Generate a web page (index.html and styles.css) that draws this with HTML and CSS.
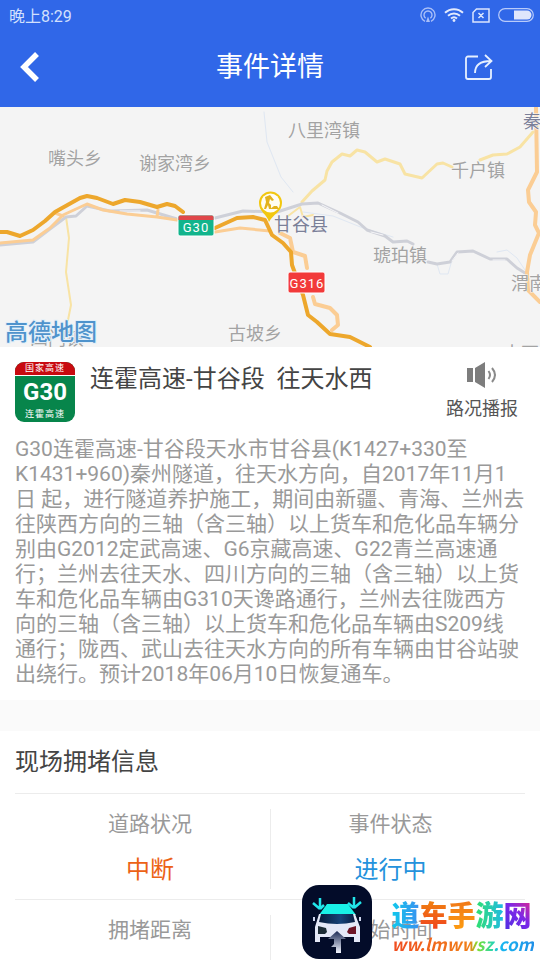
FILE: index.html
```html
<!DOCTYPE html>
<html lang="zh-CN">
<head>
  <meta charset="UTF-8">
  <meta name="viewport" content="width=device-width, initial-scale=1">
  <title>事件详情</title>
  <link rel="stylesheet" href="styles.css">
</head>
<body>
  <div class="screen">
    <header class="top">
      <div class="status-bar">
        <span>晚上8:29</span>
        <div class="status-icons">
          <svg width="16" height="16" viewBox="0 0 16 16" fill="none" stroke="#a9bff8" stroke-width="1.4">
            <path d="M5 14.3a7 7 0 1 1 6 0"/>
            <path d="M5.600 11.200a4 4 0 1 1 4.800 0"/>
            <path d="M8 9.500l2 5.500H6z" fill="#a9bff8" stroke="none"/>
          </svg>
          <svg width="20" height="14" viewBox="0 0 20 14" fill="none" stroke="#e3eafd" stroke-width="1.900">
            <path d="M1 4.800a13 13 0 0 1 18 0M4 7.800a9 9 0 0 1 12 0M7 10.500a4.500 4.500 0 0 1 6 0"/>
            <circle cx="10" cy="12.500" r="1.400" fill="#e3eafd" stroke="none"/>
          </svg>
          <svg width="18" height="15" viewBox="0 0 18 15" fill="none" stroke="#dbe5fd" stroke-width="1.500">
            <path d="M4.500 1H17v13H1V4.500zM6.500 5l5 5M11.500 5l-5 5"/>
          </svg>
          <svg width="36" height="14" viewBox="0 0 36 14">
            <rect x="0.700" y="0.700" width="34.600" height="12.600" rx="6.300" fill="none" stroke="#b9cbfa" stroke-width="1.200"/>
            <path d="M16 2.500h13a4.500 4.500 0 0 1 0 9H16z" fill="#dfe6fc"/>
          </svg>
        </div>
      </div>
      <div class="nav">
        <button class="nav-btn" aria-label="返回">
          <svg width="20" height="30" viewBox="0 0 20 30" fill="none" stroke="#fff" stroke-width="5.500">
            <path d="M18 2L5 15l13 13"/>
          </svg>
        </button>
        <h1>事件详情</h1>
        <button class="nav-btn share" aria-label="分享">
          <svg width="30" height="28" viewBox="0 0 30 28" fill="none" stroke="#e6f0ff" stroke-width="1.800">
            <path d="M14 3.500H4a2 2 0 0 0-2 2V24a2 2 0 0 0 2 2h21a2 2 0 0 0 2-2v-8"/>
            <path d="M11 20c0-8 5-12 16-12M21 2l6.500 6L21 14"/>
          </svg>
        </button>
      </div>
    </header>

    <main class="content">
      <section class="map">
        <svg class="map-canvas" viewBox="0 0 540 240" preserveAspectRatio="xMidYMid slice">
          <g fill="none" stroke-linejoin="round" stroke-linecap="round">
            <!-- rivers -->
            <g stroke="#dfe7f2" stroke-width="1">
              <path d="M264 5l3 30 14 35 12 15M303 105l30 4 30 12 30 9M437 157l3 10 8 0 4-14M497 145l10-2 10 8 8 12"/>
            </g>
            <!-- county roads -->
            <g stroke="#f8e3a4" stroke-width="3">
              <path d="M66 110l3 21-3 34 5 33-3 15" stroke-width="2"/>
              <path d="M302 95l10-11 13-11 2-9 5-9 10-8 8 2 7-6 8 2 12 10 8-3 15 5 5 10 17 4 15-14 6-1 9 4M480 53l13-5 14-1 13-7 13-15"/>
              <path d="M288 109l12-9 3 10 10-2" stroke-width="2"/>
            </g>
            <!-- railway -->
            <g stroke="#ced0d8" stroke-width="3">
              <path d="M0 138l33-3 17-13 16-12 10-1 11-10 23 5 37-1 30 9 8 4M215 111l28-7 34 1 25-8 16-1 22 10 18 9 9 8 18 6 8 6 14-1 6 3M428 155l9 2 13-2 7-10 16-1 17 8 17 0 10 9 8 5"/>
              <path d="M120 104l20 0M322 98l16 8M371 125l12 3M458 146l-6 8M493 153l12 0" stroke="#f6f6f9" stroke-width="1"/>
            </g>
            <!-- provincial roads -->
            <g stroke="#fbcd94" stroke-width="3">
              <path d="M0 136l33-3 17-12 13-13 24-11 16 6 24 4 30 3 20 3M215 125l25-4 30 3M157 110l1-7M55 106l8 3"/>
              <path d="M280 126l10 5 3 14 12 4 2 12M313 190l2 7 15 4 7 7 1 10-6 5" stroke-width="4"/>
              <path d="M536 0l1 65-9 18 1 12 7 10-1 13 4 8-9 22-3 17 1 18 12 12" stroke-width="4"/>
            </g>
            <!-- expressway -->
            <path d="M0 125h7l13 4 13-6 12-9 10-9 25-14 7-2 10 2 16 6 12-4 15 2 17 5 10-3 8 2 8 6M215 121l22-10 16-1 12 3 7 15 11 8 8 9 1 13 11 30 5 20 9 7 13 12 20 3 20 10" stroke="#eda72c" stroke-width="4"/>
          </g>

          <g class="place">
            <text x="48" y="58">嘴头乡</text>
            <text x="139" y="63">谢家湾乡</text>
            <text x="288" y="30">八里湾镇</text>
            <text x="451" y="70">千户镇</text>
            <text x="373" y="155">琥珀镇</text>
            <text x="511" y="183">渭南镇</text>
            <text x="228" y="233">古坡乡</text>
            <text x="30" y="238">四门镇</text>
            <text x="503" y="253">大石镇</text>
            <text class="county" x="274" y="124">甘谷县</text>
            <text class="county" x="523" y="21">秦安县</text>
          </g>

          <rect x="178" y="108" width="36" height="21" rx="2" fill="#12b48c" stroke="#fff"/>
          <path d="M178.500 113v-3a1.500 1.500 0 0 1 1.500-1.500h32a1.500 1.500 0 0 1 1.500 1.500v3z" fill="#e0474a"/>
          <text class="road-no" x="196" y="125">G30</text>
          <rect x="288" y="165" width="37" height="21" rx="2" fill="#f23a3a" stroke="#fff"/>
          <text class="road-no" x="307" y="181">G316</text>

          <!-- roadworks pin -->
          <path d="M269 115c-2-8-10-10-10-19a11.500 11.500 0 0 1 23 0c0 9-9 11-13 19z" fill="#f2c70f"/>
          <circle cx="270.500" cy="96" r="9.500" fill="#fffdf2"/>
          <path d="M265 90l5-2 4 5-2 1-2-2-1 4 2 2 0 4h-2l-1-4-2 4h-2l2-7zM270 102l4-3 3 0 2 3z" fill="#e3b21c"/>
          <text class="map-logo" x="5" y="233">高德地图</text>
        </svg>
      </section>

      <section class="event">
        <div class="event-head">
          <div class="shield">
            <span class="shield-top">国家高速</span>
            <span class="shield-no">G30</span>
            <span class="shield-name">连霍高速</span>
          </div>
          <h2 class="event-title">连霍高速-甘谷段  往天水西</h2>
          <button class="broadcast">
            <svg width="30" height="26" viewBox="0 0 30 26">
              <path d="M0 6h6v14H0zM8 6l10-6v26L8 20z" fill="#7d7d7d"/>
              <path d="M21.500 9q3 4 0 8M25 6q6 7 0 14" fill="none" stroke="#8a8a8a" stroke-width="2"/>
            </svg>
            <span>路况播报</span>
          </button>
        </div>
        <p class="event-text">G30连霍高速-甘谷段天水市甘谷县(K1427+330至<br>K1431+960)秦州隧道，往天水方向，自2017年11月1<br>日 起，进行隧道养护施工，期间由新疆、青海、兰州去往陕西方向的三轴（含三轴）以上货车和危化品车辆分别由G2012定武高速、G6京藏高速、G22青兰高速通行；兰州去往天水、四川方向的三轴（含三轴）以上货车和危化品车辆由G310天谗路通行，兰州去往陇西方向的三轴（含三轴）以上货车和危化品车辆由S209线<br>通行；陇西、武山去往天水方向的所有车辆由甘谷站驶<br>出绕行。预计2018年06月10日恢复通车。</p>
      </section>

      <section class="jam">
        <h2 class="jam-title">现场拥堵信息</h2>
        <div class="jam-row">
          <div class="jam-cell">
            <span class="label">道路状况</span>
            <span class="value blocked">中断</span>
          </div>
          <div class="jam-cell">
            <span class="label">事件状态</span>
            <span class="value active">进行中</span>
          </div>
        </div>
        <div class="jam-row">
          <div class="jam-cell">
            <span class="label">拥堵距离</span>
          </div>
          <div class="jam-cell">
            <span class="label">开始时间</span>
          </div>
        </div>
      </section>
    </main>

    <div class="watermark">
      <svg width="70" height="74" viewBox="0 0 70 74">
        <defs>
          <linearGradient id="arrow" x1="0" y1="0" x2="0" y2="1">
            <stop offset="0" stop-color="#1c2a55"/>
            <stop offset="1" stop-color="#f3f6ff"/>
          </linearGradient>
          <linearGradient id="glass">
            <stop offset="0" stop-color="#071a3a"/>
            <stop offset="0.600" stop-color="#174378"/>
            <stop offset="1" stop-color="#0a1d42"/>
          </linearGradient>
        </defs>
        <rect width="70" height="74" rx="17" fill="#030c29"/>
        <path d="M25 19h21l8 11H17z" fill="#19f0e6"/>
        <path d="M18 13l0 11M11 18l7 6M22 20l-4 4M52 12l0 11M46 18l6 5M59 17l-7 6" stroke="#22e5ea" stroke-width="2.500" fill="none"/>
        <path d="M17 29h36l5 13v15h-6v-5H18v5h-5V42z" fill="#e4e8f7"/>
        <path d="M19 29h32l2 8q-18 4-36 0z" fill="url(#glass)"/>
        <path d="M16 41l8 2 1 4-2 2h-7z" fill="#1d2c36"/>
        <path d="M54 41l-7 2-2 4 2 2h7z" fill="#6d1426"/>
        <path d="M12 32v4M58 32v4" stroke="#cfd6ee" stroke-width="2"/>
        <path d="M35 46l9 8h-5v14h-5v-6h-5l3-3v-5h-6z" fill="url(#arrow)"/>
      </svg>
      <div class="mark-text">
        <div class="mark-name"><span class="c1">道</span><span class="c2">车</span><span class="c3">手</span><span class="c4">游</span><span class="c5">网</span></div>
        <div class="mark-url">ww.lmwwsz.com</div>
      </div>
    </div>
  </div>
</body>
</html>
```
FILE: styles.css
```css
* {
  box-sizing: border-box;
}

body {
  margin: 0;
  font-family: Roboto, "Noto Sans CJK SC", sans-serif;
  color: #444;
  background-color: #fff;
}

h1, h2, p {
  margin: 0;
  font-weight: 400;
}

button {
  padding: 0;
  border: none;
  background: none;
  font-family: inherit;
  color: inherit;
  cursor: pointer;
}

svg {
  display: block;
}

.screen {
  position: relative;
  display: flex;
  flex-direction: column;
  height: 100vh;
  overflow: hidden;
}

/* header */
.top {
  flex: none;
  background-color: #3067e8;
  color: #fff;
}

.status-bar {
  display: flex;
  justify-content: space-between;
  align-items: center;
  height: 30px;
  padding: 0 6px 0 9px;
  font-size: 16px;
  color: #d3e0fd;
}

.status-icons {
  display: flex;
  align-items: center;
  gap: 8px;
}

.nav {
  display: grid;
  grid-template-columns: 80px 1fr 80px;
  align-items: center;
  height: 77px;
  padding-bottom: 3px;
}

.nav h1 {
  font-size: 27px;
  line-height: 40px;
  text-align: center;
}

.nav-btn {
  display: flex;
  align-items: center;
  height: 48px;
  padding-left: 19px;
}

.nav-btn.share {
  padding-left: 4px;
}

/* map */
.content {
  flex: 1;
  overflow-y: auto;
  scrollbar-width: none;
}

.map {
  height: 240px;
  background-color: #f4f4f4;
}

.map-canvas {
  width: 100%;
  height: 100%;
}

.place {
  font-size: 18px;
  fill: #a3a3a3;
  stroke: #f8f8f8;
  stroke-width: 1px;
  paint-order: stroke;
}

.place .county {
  fill: #7b8098;
}

.road-no {
  font-size: 13px;
  letter-spacing: 1px;
  text-anchor: middle;
  fill: #fff;
}

.map-logo {
  font-size: 23px;
  font-weight: 500;
  fill: #4f93cc;
  stroke: #e3f0fa;
  stroke-width: 2px;
  paint-order: stroke;
}

/* event */
.event {
  padding: 15px 15px 13px;
}

.event-head {
  display: flex;
  align-items: flex-start;
  height: 75px;
}

.shield {
  display: flex;
  flex-direction: column;
  width: 60px;
  height: 60px;
  border-radius: 9px;
  overflow: hidden;
  background-color: #07854b;
  color: #fff;
  text-align: center;
}

.shield-top,
.shield-name {
  font-size: 9px;
  line-height: 13px;
  letter-spacing: 1px;
}

.shield-top {
  background-color: #c80a10;
  border-bottom: 1px solid #fff;
}

.shield-no {
  font-size: 24px;
  font-weight: 700;
  line-height: 32px;
}

.event-title {
  flex: 1;
  margin-left: 15px;
  font-size: 24px;
  line-height: 34px;
  white-space: pre;
}

.broadcast {
  display: flex;
  flex-direction: column;
  align-items: center;
  gap: 8px;
  padding-right: 7px;
  font-size: 18px;
  line-height: 26px;
  color: #555;
}

.event-text {
  font-size: 21px;
  line-height: 25px;
  color: #999;
}

/* traffic info */
.jam {
  padding: 0 15px;
  border-top: 31px solid #fafafa;
}

.jam-title {
  font-size: 24px;
  line-height: 62px;
}

.jam-row {
  display: grid;
  grid-template-columns: 1fr 1fr;
  height: 106px;
  padding: 15px 0 10px;
  border-top: 1px solid #ececec;
}

.jam-cell {
  display: flex;
  flex-direction: column;
  align-items: center;
  gap: 14px;
  padding-left: 15px;
}

.jam-cell + .jam-cell {
  padding: 0 15px 0 0;
  border-left: 1px solid #ececec;
}

.label {
  font-size: 21px;
  line-height: 31px;
  color: #999;
}

.value {
  font-size: 24px;
  line-height: 32px;
}

.blocked {
  color: #ec6216;
}

.active {
  color: #2492dc;
}

/* site badge over the page */
.watermark {
  position: absolute;
  right: 6px;
  bottom: 1px;
  display: flex;
  align-items: flex-end;
  gap: 20px;
}

.mark-text {
  padding-bottom: 4px;
}

.mark-name {
  font-size: 28px;
  font-weight: 900;
  line-height: 32px;
}

.mark-name span {
  display: inline-block;
  background-clip: text;
  -webkit-background-clip: text;
  color: transparent;
}

.c1 {
  background-image: linear-gradient(90deg, #10c8ec, #3b8ff0);
}

.c2 {
  background-image: linear-gradient(180deg, #f08010, #f03c20);
}

.c3 {
  background-image: linear-gradient(180deg, #f07818, #ffa010);
}

.c4 {
  background-image: linear-gradient(90deg, #30e070, #20b8e8);
}

.c5 {
  background-image: linear-gradient(225deg, #e02890, #7a28e8 45%, #4a30e0);
}

.mark-url {
  font-family: "Noto Sans CJK SC", sans-serif;
  font-size: 17px;
  font-style: italic;
  font-weight: 700;
  line-height: 22px;
  background-image: linear-gradient(90deg, #f04c20 0%, #f08018 55%, #80e030 60%, #30d8a0 70%, #18b8f0 76%, #2090e8 100%);
  background-clip: text;
  -webkit-background-clip: text;
  color: transparent;
}
```
